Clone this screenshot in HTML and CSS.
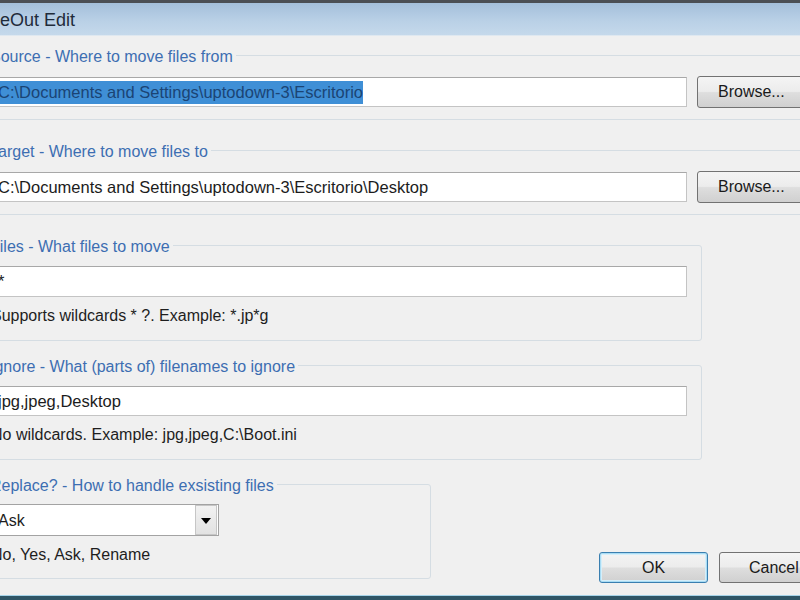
FILE: index.html
```html
<!DOCTYPE html>
<html>
<head>
<meta charset="utf-8">
<title>eOut Edit</title>
<link rel="stylesheet" href="styles.css">
</head>
<body>
<div class="window">
  <div class="titlebar"><span class="title">eOut Edit</span></div>
  <div class="dialog">
    <fieldset class="group group-wide">
      <legend>Source - Where to move files from</legend>
      <div class="row">
        <div class="textbox"><span class="sel">C:\Documents and Settings\uptodown-3\Escritorio</span></div>
        <div class="btn btn-browse">Browse...</div>
      </div>
    </fieldset>
    <fieldset class="group group-wide gap-wide">
      <legend>Target - Where to move files to</legend>
      <div class="row">
        <div class="textbox">C:\Documents and Settings\uptodown-3\Escritorio\Desktop</div>
        <div class="btn btn-browse">Browse...</div>
      </div>
    </fieldset>
    <fieldset class="group group-mid gap-wide">
      <legend>Files - What files to move</legend>
      <div class="textbox textbox-full tall">*</div>
      <div class="hint">Supports wildcards * ?. Example: *.jp*g</div>
    </fieldset>
    <fieldset class="group group-mid gap-narrow">
      <legend>Ignore - What (parts of) filenames to ignore</legend>
      <div class="textbox textbox-full">jpg,jpeg,Desktop</div>
      <div class="hint">No wildcards. Example: jpg,jpeg,C:\Boot.ini</div>
    </fieldset>
    <div class="bottom gap-narrow">
      <fieldset class="group group-small">
        <legend>Replace? - How to handle exsisting files</legend>
        <div class="combo">
          <span class="combo-text">Ask</span>
          <span class="combo-btn"><span class="arrow"></span></span>
        </div>
        <div class="hint">No, Yes, Ask, Rename</div>
      </fieldset>
      <div class="actions">
        <div class="btn btn-ok">OK</div>
        <div class="btn btn-cancel">Cancel</div>
      </div>
    </div>
  </div>
  <div class="frame-bottom"></div>
</div>
</body>
</html>
```
FILE: styles.css
```css
html, body {
  margin: 0;
  padding: 0;
}

body {
  width: 800px;
  height: 600px;
  overflow: hidden;
  background: #f0f0f0;
  font-family: "Liberation Sans", Arial, sans-serif;
  font-size: 16px;
  color: #1c1c1c;
}

.window {
  display: flex;
  flex-direction: column;
  height: 600px;
}

.titlebar {
  flex: none;
  height: 32px;
  border-top: 3px solid #4b4f55;
  border-bottom: 1px solid #dfe8f0;
  background: linear-gradient(#a4bfdb, #b9d0e6 55%, #c5d9eb);
  display: flex;
  align-items: center;
}

.title {
  font-size: 18px;
  color: #1f2b3a;
  padding-top: 2px;
}

.dialog {
  margin-left: -16px;
  padding-top: 7px;
  display: flex;
  flex-direction: column;
  align-items: flex-start;
}

.group {
  margin: 0;
  box-sizing: border-box;
  border: 1px solid #d5dde3;
  border-radius: 3px;
  padding: 9px 14px 11px 9px;
  min-width: 0;
}

.group legend {
  color: #3d6eb2;
  line-height: 20px;
  padding: 4px 3px 0;
  margin-left: -7px;
}

.group-wide {
  width: 860px;
}

.group-mid {
  width: 718px;
  padding-bottom: 14px;
}

.group-small {
  width: 447px;
  padding-top: 8px;
  padding-bottom: 13px;
}

.gap-wide {
  margin-top: 18px;
}

.gap-narrow {
  margin-top: 12px;
}

.row {
  display: flex;
  align-items: center;
  height: 32px;
  gap: 10px;
}

.textbox {
  flex: none;
  width: 693px;
  height: 30px;
  box-sizing: border-box;
  border: 1px solid #c4c4c4;
  border-top-color: #a8a8a8;
  border-left-color: #b4b4b4;
  background: #fff;
  padding: 0 3px;
  font-size: 16.5px;
  line-height: 28px;
  white-space: nowrap;
  overflow: hidden;
}

.textbox-full {
  width: 100%;
}

.tall {
  height: 31px;
}

.sel {
  display: inline-block;
  background: #3f8fd6;
  color: #1b4474;
  line-height: 23px;
}

.hint {
  line-height: 20px;
  margin-top: 9px;
  margin-left: -3px;
  color: #1e1e1e;
}

.btn {
  flex: none;
  box-sizing: border-box;
  border: 1px solid #727272;
  border-radius: 3px;
  background: linear-gradient(#f4f4f4 0%, #ececec 48%, #dedede 52%, #d0d0d0 100%);
  color: #1a1a1a;
  white-space: nowrap;
}

.btn-browse {
  width: 120px;
  height: 32px;
  line-height: 30px;
  padding-left: 20px;
}

.bottom {
  display: flex;
  align-items: flex-end;
}

.combo {
  width: 225px;
  height: 32px;
  box-sizing: border-box;
  border: 1px solid #a3a3a3;
  background: #fff;
  display: flex;
  align-items: stretch;
}

.combo-text {
  flex: 1;
  padding-left: 3px;
  line-height: 31px;
}

.combo-btn {
  width: 22px;
  margin: 0 1px 0 0;
  box-sizing: border-box;
  border: 1px solid #c6c6c6;
  background: linear-gradient(#f2f2f2, #e2e2e2);
  display: flex;
  align-items: center;
  justify-content: center;
}

.arrow {
  width: 0;
  height: 0;
  border-left: 5px solid transparent;
  border-right: 5px solid transparent;
  border-top: 6px solid #000;
  margin-top: 1px;
}

.actions {
  display: flex;
  gap: 11px;
  margin-left: 168px;
  margin-bottom: -4px;
}

.btn-ok {
  width: 109px;
  height: 31px;
  line-height: 29px;
  text-align: center;
  border-color: #3a7fb0;
  box-shadow: inset 0 0 0 1px #a9dcf4, inset 0 0 0 2px #d5eef9;
}

.btn-cancel {
  width: 120px;
  height: 31px;
  line-height: 29px;
  padding-left: 29px;
}

.frame-bottom {
  margin-top: auto;
  flex: none;
  height: 4px;
  border-top: 1px solid #a6d3e8;
  background: #2f5566;
}
```
